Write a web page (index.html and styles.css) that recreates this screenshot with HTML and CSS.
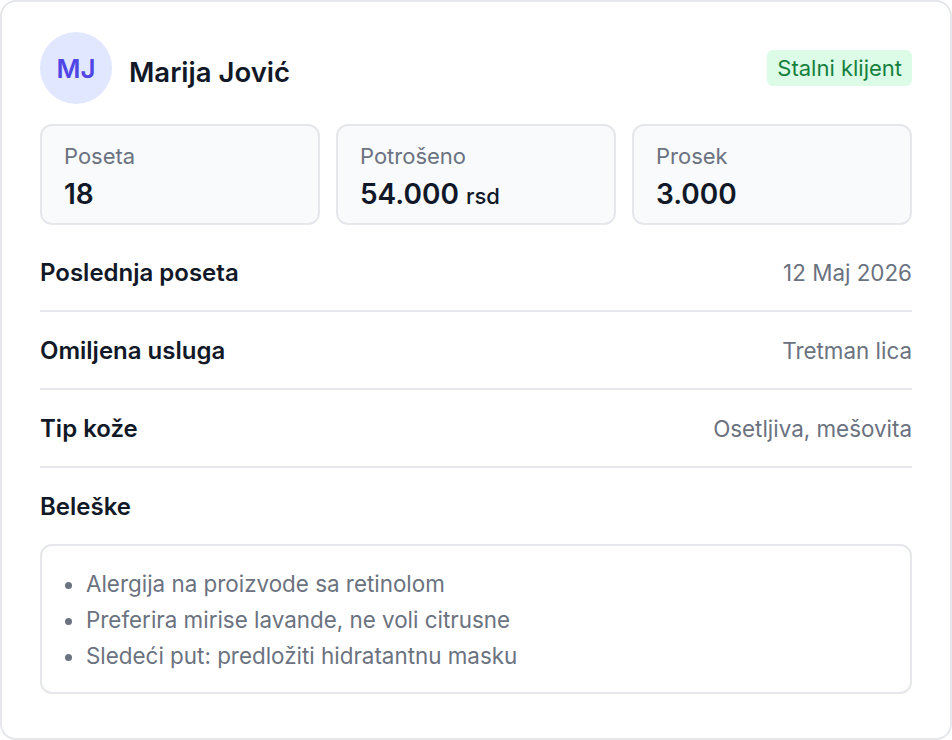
FILE: index.html
```html
<!DOCTYPE html>
<html lang="sr">
<head>
  <meta charset="UTF-8">
  <meta name="viewport" content="width=device-width, initial-scale=1.0">
  <title>Marija Jović | Klijent</title>
  <link rel="stylesheet" href="styles.css">
</head>
<body>

  <div class="card">
    <!-- zaglavlje -->
    <div class="header">
      <div class="avatar">MJ</div>
      <h1 class="name">Marija Jović</h1>
      <span class="badge">Stalni klijent</span>
    </div>

    <!-- statistika -->
    <div class="stats">
      <div class="stat">
        <div class="stat-label">Poseta</div>
        <div class="stat-value">18</div>
      </div>
      <div class="stat">
        <div class="stat-label">Potrošeno</div>
        <div class="stat-value">54.000 <span class="unit">rsd</span></div>
      </div>
      <div class="stat">
        <div class="stat-label">Prosek</div>
        <div class="stat-value">3.000</div>
      </div>
    </div>

    <div class="row">
      <span class="row-label">Poslednja poseta</span>
      <span class="row-value">12 Maj 2026</span>
    </div>
    <div class="row">
      <span class="row-label">Omiljena usluga</span>
      <span class="row-value">Tretman lica</span>
    </div>
    <div class="row">
      <span class="row-label">Tip kože</span>
      <span class="row-value">Osetljiva, mešovita</span>
    </div>

    <!-- beleške -->
    <div class="notes">
      <div class="row-label">Beleške</div>
      <ul class="notes-box">
        <li>Alergija na proizvode sa retinolom</li>
        <li>Preferira mirise lavande, ne voli citrusne</li>
        <li>Sledeći put: predložiti hidratantnu masku</li>
      </ul>
    </div>
  </div>

</body>
</html>
```

FILE: styles.css
```css
* { margin: 0; padding: 0; box-sizing: border-box; }

body {
  font-family: 'Inter', 'Noto Sans', sans-serif;
  background: #ffffff;
  color: #111827;
}

.card {
  width: 952px;
  height: 740px;
  border: 2px solid #e5e7eb;
  border-radius: 16px;
  padding: 30px 38px;
  background: #ffffff;
}

/* zaglavlje */
.header {
  display: flex;
  align-items: center;
  gap: 17px;
  height: 72px;
}

.avatar {
  width: 72px;
  height: 72px;
  border-radius: 50%;
  background: #e0e7ff;
  color: #4f46e5;
  font-size: 26px;
  font-weight: 600;
  display: flex;
  align-items: center;
  justify-content: center;
}

.name {
  font-size: 27.5px;
  font-weight: 600;
  flex: 1;
  margin-top: 8px;
}

.badge {
  background: #dcfce7;
  color: #15803d;
  font-size: 22px;
  line-height: 28px;
  padding: 4px 10px;
  border-radius: 6px;
}

/* statistika */
.stats {
  display: grid;
  grid-template-columns: repeat(3, 1fr);
  gap: 16px;
  margin-top: 20px;
  margin-bottom: 9px;
}

.stat {
  background: #f8fafc;
  border: 2px solid #e5e7eb;
  border-radius: 12px;
  padding: 16px 22px 0;
  height: 101px;
}

.stat-label {
  font-size: 22px;
  line-height: 28px;
  color: #6b7280;
}

.stat-value {
  font-size: 28px;
  line-height: 38px;
  font-weight: 600;
  margin-top: 5px;
}

.unit {
  font-size: 22px;
  font-weight: 500;
}

/* redovi */
.row {
  display: flex;
  justify-content: space-between;
  align-items: center;
  padding: 24px 0 22px;
  border-bottom: 2px solid #e5e7eb;
}

.row-label {
  font-size: 24px;
  line-height: 30px;
  font-weight: 600;
}

.row-value {
  font-size: 22.4px;
  line-height: 30px;
  color: #6b7280;
}

/* beleške */
.notes {
  padding-top: 24px;
}

.notes-box {
  margin-top: 22px;
  border: 2px solid #e5e7eb;
  border-radius: 12px;
  padding: 20px 24px 18px 44px;
  color: #6b7280;
  font-size: 22.4px;
  line-height: 36px;
}
```
